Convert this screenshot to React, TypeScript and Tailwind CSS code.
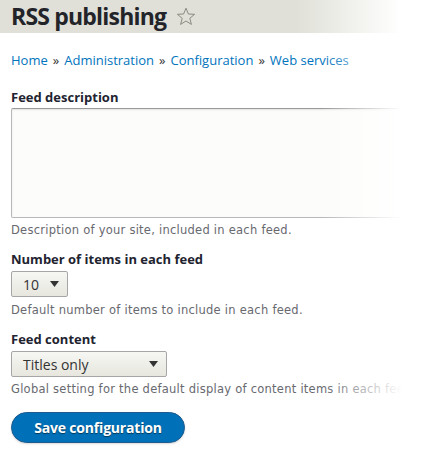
import React from "react";

function Caret() {
  return (
    <svg width="9" height="6" viewBox="0 0 9 6" className="shrink-0">
      <path d="M0 0 H9 L4.5 6 Z" fill="#333" />
    </svg>
  );
}

function Star() {
  return (
    <svg width="20" height="19" viewBox="0 0 20 19">
      <path
        d="M10 1.2 L12.4 7 L18.6 7.3 L13.8 11.3 L15.4 17.4 L10 14 L4.6 17.4 L6.2 11.3 L1.4 7.3 L7.6 7 Z"
        fill="none"
        stroke="#8a8a80"
        strokeWidth="1"
        strokeLinejoin="round"
      />
    </svg>
  );
}

export default function App() {
  const body = { fontFamily: '"DejaVu Sans", "Liberation Sans", sans-serif' };
  const head = { fontFamily: '"Open Sans", "DejaVu Sans", sans-serif' };
  return (
    <div className="relative w-[422px] h-[463px] overflow-hidden bg-white text-[#222330]" style={body}>
      <div className="h-[33px] bg-gradient-to-r from-[#e0e0d8] from-[70%] to-white to-[95%] flex items-center pl-[11px] gap-[10px]">
        <h1 className="text-[23px] font-bold leading-none text-[#232429] tracking-[-0.8px] -mt-[1px]" style={head}>
          RSS publishing
        </h1>
        <Star />
      </div>

      <div className="px-[11px]">
        <nav className="mt-[19px] text-[13px] leading-[16px] text-[#0074bd] flex gap-[5px]" style={head}>
          <span>Home</span>
          <span className="text-[#333]">»</span>
          <span>Administration</span>
          <span className="text-[#333]">»</span>
          <span>Configuration</span>
          <span className="text-[#333]">»</span>
          <span>Web services</span>
        </nav>

        <div className="mt-[21px]">
          <div className="text-[13px] font-bold leading-[16px]" style={head}>Feed description</div>
          <div className="mt-[3px] h-[110px] w-[430px] border border-[#b8b8b8] border-t-[#999] rounded-[2px] bg-[#fcfcfa] shadow-[inset_0_1px_2px_rgba(0,0,0,0.1)]" />
          <div className="mt-[5px] text-[11.5px] leading-[14px] text-[#68696f] tracking-[0.25px]">
            Description of your site, included in each feed.
          </div>
        </div>

        <div className="mt-[14px]">
          <div className="text-[13px] font-bold leading-[16px]" style={head}>Number of items in each feed</div>
          <div className="mt-[4px] w-[57px] h-[26px] border border-[#a6a6a6] rounded-[2px] bg-gradient-to-b from-[#f6f6f3] to-[#e7e7df] flex items-center justify-between pl-[11px] pr-[8px] text-[14px] text-[#333]" style={head}>
            <span>10</span>
            <Caret />
          </div>
          <div className="mt-[6px] text-[11.5px] leading-[14px] text-[#68696f] tracking-[0.25px]">
            Default number of items to include in each feed.
          </div>
        </div>

        <div className="mt-[14px]">
          <div className="text-[13px] font-bold leading-[16px]" style={head}>Feed content</div>
          <div className="mt-[4px] w-[156px] h-[26px] border border-[#a6a6a6] rounded-[2px] bg-gradient-to-b from-[#f6f6f3] to-[#e7e7df] flex items-center justify-between pl-[11px] pr-[8px] text-[14px] text-[#333]" style={head}>
            <span>Titles only</span>
            <Caret />
          </div>
          <div className="mt-[5px] text-[11.5px] leading-[14px] text-[#68696f] tracking-[0.25px] whitespace-nowrap">
            Global setting for the default display of content items in each feed.
          </div>
        </div>

        <button
          className="mt-[16px] w-[174px] h-[31px] rounded-full bg-[#0071b8] border border-[#1e5c90] text-white text-[14px] font-bold tracking-[-0.2px] shadow-[0_1px_2px_rgba(0,0,0,0.15)]"
          style={{ ...head, textShadow: "0 1px 1px rgba(0,0,0,0.5)" }}
        >
          Save configuration
        </button>
      </div>

      <div className="pointer-events-none absolute top-[40px] bottom-0 right-0 w-[100px] bg-gradient-to-r from-transparent to-white to-[80%]" />
    </div>
  );
}
